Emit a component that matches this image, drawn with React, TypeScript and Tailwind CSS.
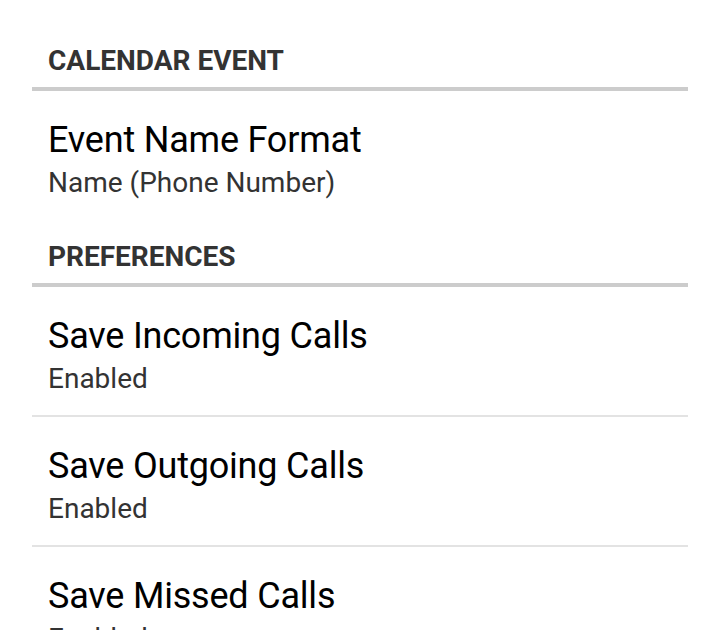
import React from 'react';

type Pref = { title: string; summary: string };

const Category: React.FC<{ label: string; first?: boolean }> = ({ label, first }) => (
  <div className={first ? 'pt-[43px]' : 'pt-[20px]'}>
    <div className="pl-4 pb-[8px] text-[28px] leading-[36px] font-bold uppercase text-[#333333]">
      {label}
    </div>
    <div className="h-[4px] bg-[#cccccc]" />
  </div>
);

const Item: React.FC<{ pref: Pref; divider?: boolean }> = ({ pref, divider }) => (
  <div>
    <div className="h-[128px] pl-4 pt-[29px]">
      <div className="text-[36px] leading-[40px] tracking-[-0.2px] text-black">{pref.title}</div>
      <div className="mt-[5px] text-[28px] leading-[36px] text-[#333333]">{pref.summary}</div>
    </div>
    {divider && <div className="h-[2px] bg-[#e3e3e3]" />}
  </div>
);

const preferences: Pref[] = [
  { title: 'Save Incoming Calls', summary: 'Enabled' },
  { title: 'Save Outgoing Calls', summary: 'Enabled' },
  { title: 'Save Missed Calls', summary: 'Enabled' },
];

export default function App() {
  return (
    <div className="h-[630px] overflow-hidden bg-white px-8" style={{ fontFamily: 'Roboto, "Noto Sans", sans-serif' }}>
      <Category label="Calendar Event" first />
      <Item pref={{ title: 'Event Name Format', summary: 'Name (Phone Number)' }} />
      <Category label="Preferences" />
      {preferences.map((p, i) => (
        <Item key={p.title} pref={p} divider={i < preferences.length - 1} />
      ))}
    </div>
  );
}
